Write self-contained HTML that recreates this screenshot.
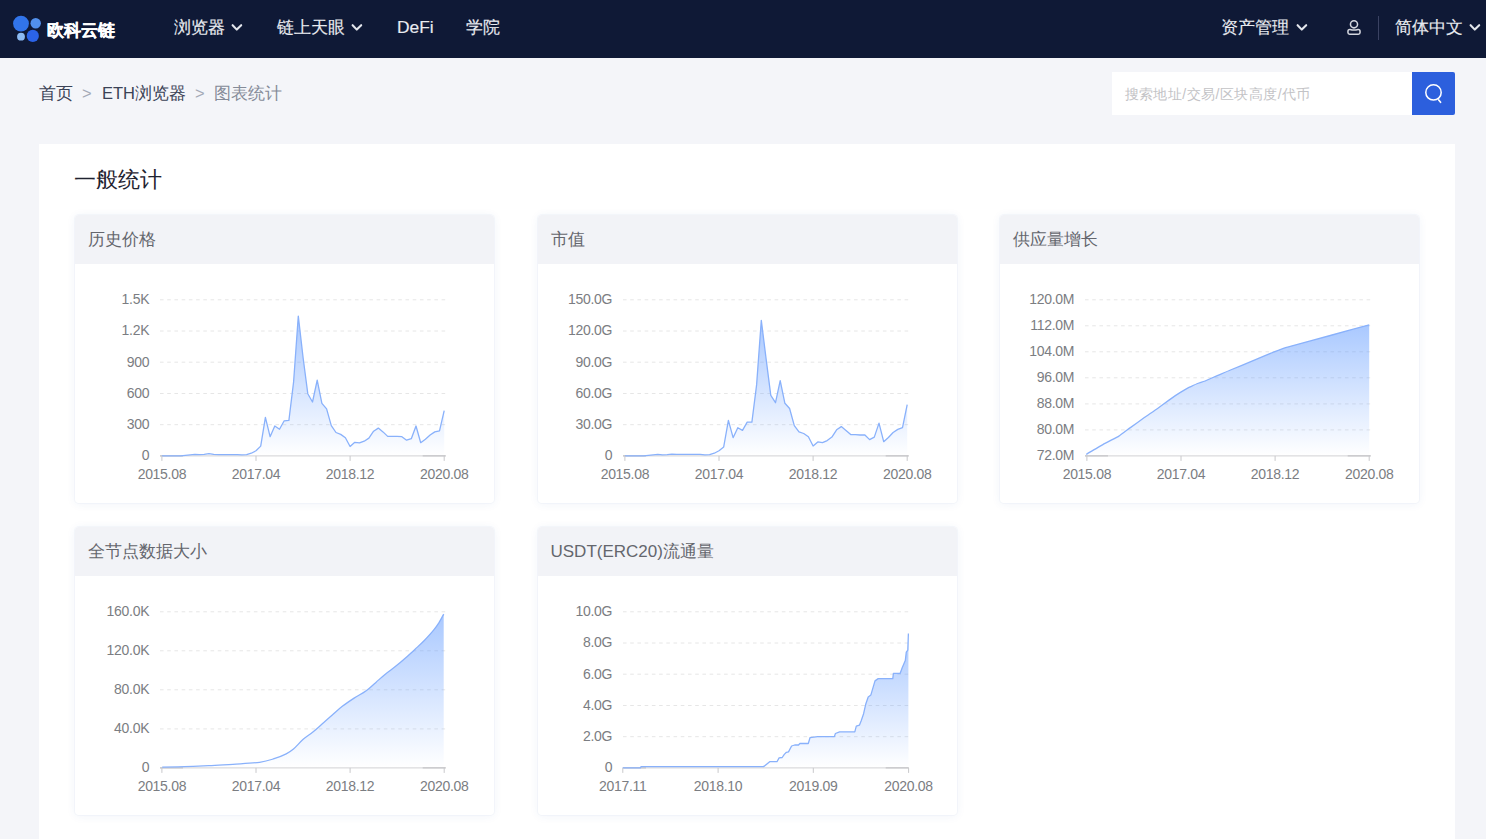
<!DOCTYPE html>
<html><head><meta charset="utf-8"><style>
*{box-sizing:border-box;margin:0;padding:0}
html,body{width:1486px;height:839px;overflow:hidden;background:#f4f5f9;font-family:"Liberation Sans",sans-serif}
.hdr{position:absolute;left:0;top:0;width:1486px;height:57.5px;background:#0f1936}
.abs{position:absolute;white-space:nowrap}
.nav{color:#e9ebf0;font-size:17.4px;line-height:20px;-webkit-text-stroke:0.15px #e9ebf0}
.chev{position:absolute}
.bc{font-size:16.5px;line-height:20px;color:#3b4256}
.main{position:absolute;left:39px;top:144px;width:1416px;height:720px;background:#fff}
.card{position:absolute;width:419px;height:287.5px;background:#fff;border-radius:4px;box-shadow:0 0 0 1px rgba(225,231,245,0.25),0 1px 10px rgba(40,80,170,0.07);overflow:hidden}
.ch{height:49px;background:#f2f3f7;padding-left:13px}
.ch span{display:block;padding-top:15px;font-size:17px;line-height:20px;color:#64666d}
.cs{position:absolute;left:0;top:0}
.yl{font-family:"Liberation Sans",sans-serif;font-size:14px;letter-spacing:-0.3px;fill:#7b7d82;text-anchor:end}
.xl{font-family:"Liberation Sans",sans-serif;font-size:14px;letter-spacing:-0.3px;fill:#7b7d82;text-anchor:middle}
</style></head><body>
<div class="hdr">
  <svg class="abs" style="left:0;top:0" width="130" height="58">
    <circle cx="21" cy="23.6" r="7.9" fill="#3174ea"/>
    <circle cx="35.7" cy="23.2" r="5.2" fill="#5290ec"/>
    <circle cx="21" cy="36.7" r="3.9" fill="#8cbaf2"/>
    <circle cx="32.8" cy="35.9" r="6.1" fill="#2b63e8"/>
  </svg>
  <div class="abs" style="left:46.5px;top:18.2px;font-size:17.2px;line-height:24px;font-weight:bold;color:#fff;-webkit-text-stroke:0.3px #fff">欧科云链</div>
  <div class="abs nav" style="left:174px;top:17px">浏览器</div>
  <svg class="chev" style="left:231px;top:22.9px" width="12" height="10"><path d="M1.6,2.2 L5.8,6.6 L10.2,2.2" fill="none" stroke="#e3e6ec" stroke-width="2.1" stroke-linecap="round" stroke-linejoin="round"/></svg>
  <div class="abs nav" style="left:277px;top:17px">链上天眼</div>
  <svg class="chev" style="left:351px;top:22.9px" width="12" height="10"><path d="M1.6,2.2 L5.8,6.6 L10.2,2.2" fill="none" stroke="#e3e6ec" stroke-width="2.1" stroke-linecap="round" stroke-linejoin="round"/></svg>
  <div class="abs nav" style="left:397px;top:17px">DeFi</div>
  <div class="abs nav" style="left:466px;top:17px">学院</div>
  <div class="abs nav" style="left:1221px;top:17px">资产管理</div>
  <svg class="chev" style="left:1296px;top:22.9px" width="12" height="10"><path d="M1.6,2.2 L5.8,6.6 L10.2,2.2" fill="none" stroke="#e3e6ec" stroke-width="2.1" stroke-linecap="round" stroke-linejoin="round"/></svg>
  <svg class="abs" style="left:1340px;top:15px" width="30" height="27"><circle cx="14" cy="9.3" r="3.55" fill="none" stroke="#d3d6de" stroke-width="1.55"/><path d="M10,14.5 Q14,15.6 18,14.5 L18.3,14.5 Q20.05,14.5 20.05,16.5 L20.05,17.6 Q20.05,19.25 18.3,19.25 L9.7,19.25 Q7.95,19.25 7.95,17.6 L7.95,16.5 Q7.95,14.5 9.7,14.5 Z" fill="none" stroke="#d3d6de" stroke-width="1.55" stroke-linejoin="round"/></svg>
  <div class="abs" style="left:1378px;top:16px;width:1px;height:24px;background:#3a4262"></div>
  <div class="abs nav" style="left:1394.5px;top:17px">简体中文</div>
  <svg class="chev" style="left:1469px;top:22.9px" width="12" height="10"><path d="M1.6,2.2 L5.8,6.6 L10.2,2.2" fill="none" stroke="#e3e6ec" stroke-width="2.1" stroke-linecap="round" stroke-linejoin="round"/></svg>
</div>
<div class="abs bc" style="left:39px;top:83px">首页</div>
<div class="abs bc" style="left:82px;top:83px;color:#a3a9b6">&gt;</div>
<div class="abs bc" style="left:102px;top:83px">ETH浏览器</div>
<div class="abs bc" style="left:195px;top:83px;color:#a3a9b6">&gt;</div>
<div class="abs bc" style="left:214px;top:83px;color:#858b98">图表统计</div>
<div class="abs" style="left:1112px;top:72px;width:300px;height:43px;background:#fff"></div>
<div class="abs" style="left:1124.5px;top:85px;font-size:14px;letter-spacing:0.45px;line-height:18px;color:#c3c3c6">搜索地址/交易/区块高度/代币</div>
<div class="abs" style="left:1412px;top:72px;width:43px;height:43px;background:#2c5fdd;border-radius:0 2px 2px 0"></div>
<svg class="abs" style="left:1412px;top:72px" width="43" height="43"><circle cx="21.5" cy="20.4" r="7.7" fill="none" stroke="#fff" stroke-width="1.5"/><path d="M26.7,27.9 L28.6,30.3" stroke="#fff" stroke-width="1.6" stroke-linecap="round"/></svg>
<div class="main"></div>
<div class="abs" style="left:74px;top:167px;font-size:22px;line-height:26px;color:#1f2330">一般统计</div>
<div class="card" style="left:75.3px;top:215.0px"><div class="ch"><span>历史价格</span></div><svg class="cs" width="420" height="287" viewBox="0 0 420 287"><defs><linearGradient id="g0" x1="0" y1="0" x2="0" y2="1"><stop offset="0" stop-color="#5a96ff" stop-opacity="0.52"/><stop offset="1" stop-color="#5a96ff" stop-opacity="0"/></linearGradient></defs><line x1="85.0" y1="84.8" x2="370.7" y2="84.8" stroke="#e6e6e6" stroke-width="1" stroke-dasharray="3.6,3.62"/><line x1="85.0" y1="116.0" x2="370.7" y2="116.0" stroke="#e6e6e6" stroke-width="1" stroke-dasharray="3.6,3.62"/><line x1="85.0" y1="147.2" x2="370.7" y2="147.2" stroke="#e6e6e6" stroke-width="1" stroke-dasharray="3.6,3.62"/><line x1="85.0" y1="178.5" x2="370.7" y2="178.5" stroke="#e6e6e6" stroke-width="1" stroke-dasharray="3.6,3.62"/><line x1="85.0" y1="209.7" x2="370.7" y2="209.7" stroke="#e6e6e6" stroke-width="1" stroke-dasharray="3.6,3.62"/><text x="74.2" y="89.1" class="yl">1.5K</text><text x="74.2" y="120.3" class="yl">1.2K</text><text x="74.2" y="151.5" class="yl">900</text><text x="74.2" y="182.8" class="yl">600</text><text x="74.2" y="214.0" class="yl">300</text><text x="74.2" y="245.2" class="yl">0</text><path d="M86.9,240.9 L91.6,240.9 L96.3,240.9 L101.0,240.9 L105.7,240.9 L110.4,240.4 L115.1,239.8 L119.8,239.4 L124.5,239.6 L129.2,239.4 L133.9,238.6 L138.7,239.4 L143.4,239.6 L148.1,239.6 L152.8,239.6 L157.5,239.6 L162.2,239.6 L166.9,239.8 L171.6,239.6 L176.3,238.2 L181.0,235.7 L185.7,231.1 L190.4,202.3 L195.1,221.7 L199.8,211.0 L204.5,214.2 L209.2,205.8 L213.9,205.4 L218.6,166.8 L223.3,101.1 L228.1,142.8 L232.8,178.7 L237.5,187.0 L242.2,165.1 L246.9,188.3 L251.6,193.9 L256.3,210.6 L261.0,217.5 L265.7,219.4 L270.4,222.7 L275.1,231.5 L279.8,227.3 L284.5,227.9 L289.2,226.2 L293.9,223.1 L298.6,216.2 L303.3,213.1 L308.0,216.9 L312.7,221.4 L317.4,221.4 L322.1,221.4 L326.9,221.7 L331.6,225.2 L336.3,223.7 L341.0,211.0 L345.7,227.7 L350.4,224.2 L355.1,220.0 L359.8,216.9 L364.5,215.8 L369.2,195.6 L369.2,240.9 L86.9,240.9 Z" fill="url(#g0)"/><line x1="85.0" y1="240.9" x2="370.7" y2="240.9" stroke="#d2d2d4" stroke-width="1"/><line x1="347.7" y1="240.9" x2="370.7" y2="240.9" stroke="#bdbdc0" stroke-width="1"/><line x1="85.0" y1="240.9" x2="108.0" y2="240.9" stroke="#bdbdc0" stroke-width="1"/><path d="M86.9,240.9 L91.6,240.9 L96.3,240.9 L101.0,240.9 L105.7,240.9 L110.4,240.4 L115.1,239.8 L119.8,239.4 L124.5,239.6 L129.2,239.4 L133.9,238.6 L138.7,239.4 L143.4,239.6 L148.1,239.6 L152.8,239.6 L157.5,239.6 L162.2,239.6 L166.9,239.8 L171.6,239.6 L176.3,238.2 L181.0,235.7 L185.7,231.1 L190.4,202.3 L195.1,221.7 L199.8,211.0 L204.5,214.2 L209.2,205.8 L213.9,205.4 L218.6,166.8 L223.3,101.1 L228.1,142.8 L232.8,178.7 L237.5,187.0 L242.2,165.1 L246.9,188.3 L251.6,193.9 L256.3,210.6 L261.0,217.5 L265.7,219.4 L270.4,222.7 L275.1,231.5 L279.8,227.3 L284.5,227.9 L289.2,226.2 L293.9,223.1 L298.6,216.2 L303.3,213.1 L308.0,216.9 L312.7,221.4 L317.4,221.4 L322.1,221.4 L326.9,221.7 L331.6,225.2 L336.3,223.7 L341.0,211.0 L345.7,227.7 L350.4,224.2 L355.1,220.0 L359.8,216.9 L364.5,215.8 L369.2,195.6" fill="none" stroke="#89b1fb" stroke-width="1.3" stroke-linejoin="round"/><line x1="86.9" y1="240.9" x2="86.9" y2="245.9" stroke="#c8c8cb" stroke-width="1"/><text x="86.9" y="263.9" class="xl">2015.08</text><line x1="181.0" y1="240.9" x2="181.0" y2="245.9" stroke="#c8c8cb" stroke-width="1"/><text x="181.0" y="263.9" class="xl">2017.04</text><line x1="275.1" y1="240.9" x2="275.1" y2="245.9" stroke="#c8c8cb" stroke-width="1"/><text x="275.1" y="263.9" class="xl">2018.12</text><line x1="369.2" y1="240.9" x2="369.2" y2="245.9" stroke="#c8c8cb" stroke-width="1"/><text x="369.2" y="263.9" class="xl">2020.08</text></svg></div>
<div class="card" style="left:537.5px;top:215.0px"><div class="ch"><span>市值</span></div><svg class="cs" width="420" height="287" viewBox="0 0 420 287"><defs><linearGradient id="g1" x1="0" y1="0" x2="0" y2="1"><stop offset="0" stop-color="#5a96ff" stop-opacity="0.52"/><stop offset="1" stop-color="#5a96ff" stop-opacity="0"/></linearGradient></defs><line x1="85.0" y1="84.8" x2="370.7" y2="84.8" stroke="#e6e6e6" stroke-width="1" stroke-dasharray="3.6,3.62"/><line x1="85.0" y1="116.0" x2="370.7" y2="116.0" stroke="#e6e6e6" stroke-width="1" stroke-dasharray="3.6,3.62"/><line x1="85.0" y1="147.2" x2="370.7" y2="147.2" stroke="#e6e6e6" stroke-width="1" stroke-dasharray="3.6,3.62"/><line x1="85.0" y1="178.5" x2="370.7" y2="178.5" stroke="#e6e6e6" stroke-width="1" stroke-dasharray="3.6,3.62"/><line x1="85.0" y1="209.7" x2="370.7" y2="209.7" stroke="#e6e6e6" stroke-width="1" stroke-dasharray="3.6,3.62"/><text x="74.2" y="89.1" class="yl">150.0G</text><text x="74.2" y="120.3" class="yl">120.0G</text><text x="74.2" y="151.5" class="yl">90.0G</text><text x="74.2" y="182.8" class="yl">60.0G</text><text x="74.2" y="214.0" class="yl">30.0G</text><text x="74.2" y="245.2" class="yl">0</text><path d="M86.9,240.9 L91.6,240.9 L96.3,240.9 L101.0,240.9 L105.7,240.9 L110.4,240.4 L115.1,239.8 L119.8,239.4 L124.5,239.8 L129.2,239.6 L133.9,239.2 L138.7,239.4 L143.4,239.4 L148.1,239.4 L152.8,239.4 L157.5,239.4 L162.2,239.4 L166.9,239.8 L171.6,239.6 L176.3,238.2 L181.0,235.7 L185.7,231.9 L190.4,205.4 L195.1,222.7 L199.8,212.7 L204.5,215.4 L209.2,207.1 L213.9,207.1 L218.6,169.9 L223.3,105.3 L228.1,143.8 L232.8,180.4 L237.5,187.7 L242.2,165.7 L246.9,188.3 L251.6,193.5 L256.3,210.6 L261.0,216.9 L265.7,218.5 L270.4,221.7 L275.1,231.0 L279.8,226.9 L284.5,227.7 L289.2,225.6 L293.9,222.1 L298.6,214.8 L303.3,211.6 L308.0,215.4 L312.7,219.6 L317.4,219.6 L322.1,220.0 L326.9,220.0 L331.6,224.6 L336.3,222.1 L341.0,208.1 L345.7,226.7 L350.4,222.5 L355.1,217.5 L359.8,214.4 L364.5,212.7 L369.2,189.7 L369.2,240.9 L86.9,240.9 Z" fill="url(#g1)"/><line x1="85.0" y1="240.9" x2="370.7" y2="240.9" stroke="#d2d2d4" stroke-width="1"/><line x1="347.7" y1="240.9" x2="370.7" y2="240.9" stroke="#bdbdc0" stroke-width="1"/><line x1="85.0" y1="240.9" x2="108.0" y2="240.9" stroke="#bdbdc0" stroke-width="1"/><path d="M86.9,240.9 L91.6,240.9 L96.3,240.9 L101.0,240.9 L105.7,240.9 L110.4,240.4 L115.1,239.8 L119.8,239.4 L124.5,239.8 L129.2,239.6 L133.9,239.2 L138.7,239.4 L143.4,239.4 L148.1,239.4 L152.8,239.4 L157.5,239.4 L162.2,239.4 L166.9,239.8 L171.6,239.6 L176.3,238.2 L181.0,235.7 L185.7,231.9 L190.4,205.4 L195.1,222.7 L199.8,212.7 L204.5,215.4 L209.2,207.1 L213.9,207.1 L218.6,169.9 L223.3,105.3 L228.1,143.8 L232.8,180.4 L237.5,187.7 L242.2,165.7 L246.9,188.3 L251.6,193.5 L256.3,210.6 L261.0,216.9 L265.7,218.5 L270.4,221.7 L275.1,231.0 L279.8,226.9 L284.5,227.7 L289.2,225.6 L293.9,222.1 L298.6,214.8 L303.3,211.6 L308.0,215.4 L312.7,219.6 L317.4,219.6 L322.1,220.0 L326.9,220.0 L331.6,224.6 L336.3,222.1 L341.0,208.1 L345.7,226.7 L350.4,222.5 L355.1,217.5 L359.8,214.4 L364.5,212.7 L369.2,189.7" fill="none" stroke="#89b1fb" stroke-width="1.3" stroke-linejoin="round"/><line x1="86.9" y1="240.9" x2="86.9" y2="245.9" stroke="#c8c8cb" stroke-width="1"/><text x="86.9" y="263.9" class="xl">2015.08</text><line x1="181.0" y1="240.9" x2="181.0" y2="245.9" stroke="#c8c8cb" stroke-width="1"/><text x="181.0" y="263.9" class="xl">2017.04</text><line x1="275.1" y1="240.9" x2="275.1" y2="245.9" stroke="#c8c8cb" stroke-width="1"/><text x="275.1" y="263.9" class="xl">2018.12</text><line x1="369.2" y1="240.9" x2="369.2" y2="245.9" stroke="#c8c8cb" stroke-width="1"/><text x="369.2" y="263.9" class="xl">2020.08</text></svg></div>
<div class="card" style="left:999.7px;top:215.0px"><div class="ch"><span>供应量增长</span></div><svg class="cs" width="420" height="287" viewBox="0 0 420 287"><defs><linearGradient id="g2" x1="0" y1="0" x2="0" y2="1"><stop offset="0" stop-color="#5a96ff" stop-opacity="0.52"/><stop offset="1" stop-color="#5a96ff" stop-opacity="0"/></linearGradient></defs><line x1="85.0" y1="84.8" x2="370.7" y2="84.8" stroke="#e6e6e6" stroke-width="1" stroke-dasharray="3.6,3.62"/><line x1="85.0" y1="110.8" x2="370.7" y2="110.8" stroke="#e6e6e6" stroke-width="1" stroke-dasharray="3.6,3.62"/><line x1="85.0" y1="136.8" x2="370.7" y2="136.8" stroke="#e6e6e6" stroke-width="1" stroke-dasharray="3.6,3.62"/><line x1="85.0" y1="162.8" x2="370.7" y2="162.8" stroke="#e6e6e6" stroke-width="1" stroke-dasharray="3.6,3.62"/><line x1="85.0" y1="188.9" x2="370.7" y2="188.9" stroke="#e6e6e6" stroke-width="1" stroke-dasharray="3.6,3.62"/><line x1="85.0" y1="214.9" x2="370.7" y2="214.9" stroke="#e6e6e6" stroke-width="1" stroke-dasharray="3.6,3.62"/><text x="74.2" y="89.1" class="yl">120.0M</text><text x="74.2" y="115.1" class="yl">112.0M</text><text x="74.2" y="141.1" class="yl">104.0M</text><text x="74.2" y="167.2" class="yl">96.0M</text><text x="74.2" y="193.2" class="yl">88.0M</text><text x="74.2" y="219.2" class="yl">80.0M</text><text x="74.2" y="245.2" class="yl">72.0M</text><path d="M86.3,239.4 C86.7,239.1 93.8,234.9 94.6,234.4 C95.4,233.9 102.0,230.1 103.2,229.4 C104.4,228.7 117.5,221.9 118.9,221.1 C120.3,220.3 129.1,213.5 130.4,212.6 C131.7,211.7 143.3,203.3 144.7,202.3 C146.1,201.3 156.4,194.3 157.6,193.4 C158.8,192.5 167.9,185.9 169.0,185.1 C170.1,184.3 179.4,178.0 180.4,177.4 C181.4,176.8 188.1,172.8 189.0,172.4 C189.9,172.0 196.7,168.8 197.6,168.5 C198.5,168.2 205.3,165.9 206.2,165.5 C207.1,165.1 215.0,161.6 216.2,161.1 C217.4,160.6 228.7,155.7 230.5,155.0 C232.3,154.3 249.9,147.1 252.0,146.2 C254.1,145.3 271.8,137.8 273.4,137.2 C275.0,136.6 282.6,133.6 283.4,133.3 C284.2,133.0 288.0,132.0 290.3,131.4 C292.6,130.8 326.4,121.6 330.3,120.5 C334.2,119.4 367.3,110.3 369.2,109.8 L369.2,240.9 L86.3,240.9 Z" fill="url(#g2)"/><line x1="85.0" y1="240.9" x2="370.7" y2="240.9" stroke="#d2d2d4" stroke-width="1"/><line x1="347.7" y1="240.9" x2="370.7" y2="240.9" stroke="#bdbdc0" stroke-width="1"/><line x1="85.0" y1="240.9" x2="108.0" y2="240.9" stroke="#bdbdc0" stroke-width="1"/><path d="M86.3,239.4 C86.7,239.1 93.8,234.9 94.6,234.4 C95.4,233.9 102.0,230.1 103.2,229.4 C104.4,228.7 117.5,221.9 118.9,221.1 C120.3,220.3 129.1,213.5 130.4,212.6 C131.7,211.7 143.3,203.3 144.7,202.3 C146.1,201.3 156.4,194.3 157.6,193.4 C158.8,192.5 167.9,185.9 169.0,185.1 C170.1,184.3 179.4,178.0 180.4,177.4 C181.4,176.8 188.1,172.8 189.0,172.4 C189.9,172.0 196.7,168.8 197.6,168.5 C198.5,168.2 205.3,165.9 206.2,165.5 C207.1,165.1 215.0,161.6 216.2,161.1 C217.4,160.6 228.7,155.7 230.5,155.0 C232.3,154.3 249.9,147.1 252.0,146.2 C254.1,145.3 271.8,137.8 273.4,137.2 C275.0,136.6 282.6,133.6 283.4,133.3 C284.2,133.0 288.0,132.0 290.3,131.4 C292.6,130.8 326.4,121.6 330.3,120.5 C334.2,119.4 367.3,110.3 369.2,109.8" fill="none" stroke="#89b1fb" stroke-width="1.3" stroke-linejoin="round"/><line x1="86.9" y1="240.9" x2="86.9" y2="245.9" stroke="#c8c8cb" stroke-width="1"/><text x="86.9" y="263.9" class="xl">2015.08</text><line x1="181.0" y1="240.9" x2="181.0" y2="245.9" stroke="#c8c8cb" stroke-width="1"/><text x="181.0" y="263.9" class="xl">2017.04</text><line x1="275.1" y1="240.9" x2="275.1" y2="245.9" stroke="#c8c8cb" stroke-width="1"/><text x="275.1" y="263.9" class="xl">2018.12</text><line x1="369.2" y1="240.9" x2="369.2" y2="245.9" stroke="#c8c8cb" stroke-width="1"/><text x="369.2" y="263.9" class="xl">2020.08</text></svg></div>
<div class="card" style="left:75.3px;top:527.3px"><div class="ch"><span>全节点数据大小</span></div><svg class="cs" width="420" height="287" viewBox="0 0 420 287"><defs><linearGradient id="g3" x1="0" y1="0" x2="0" y2="1"><stop offset="0" stop-color="#5a96ff" stop-opacity="0.52"/><stop offset="1" stop-color="#5a96ff" stop-opacity="0"/></linearGradient></defs><line x1="85.0" y1="84.8" x2="370.7" y2="84.8" stroke="#e6e6e6" stroke-width="1" stroke-dasharray="3.6,3.62"/><line x1="85.0" y1="123.8" x2="370.7" y2="123.8" stroke="#e6e6e6" stroke-width="1" stroke-dasharray="3.6,3.62"/><line x1="85.0" y1="162.8" x2="370.7" y2="162.8" stroke="#e6e6e6" stroke-width="1" stroke-dasharray="3.6,3.62"/><line x1="85.0" y1="201.9" x2="370.7" y2="201.9" stroke="#e6e6e6" stroke-width="1" stroke-dasharray="3.6,3.62"/><text x="74.2" y="89.1" class="yl">160.0K</text><text x="74.2" y="128.1" class="yl">120.0K</text><text x="74.2" y="167.2" class="yl">80.0K</text><text x="74.2" y="206.2" class="yl">40.0K</text><text x="74.2" y="245.2" class="yl">0</text><path d="M87.2,240.2 C91.1,240.1 101.4,239.9 109.5,239.7 C117.6,239.4 125.2,239.1 133.7,238.7 C142.2,238.3 149.0,237.8 157.9,237.3 C166.8,236.7 177.4,236.3 184.6,235.3 C191.8,234.3 194.5,233.2 199.1,231.7 C203.8,230.2 207.8,228.5 211.2,226.8 C214.6,225.1 215.5,224.5 218.5,222.0 C221.5,219.4 224.8,215.3 228.2,212.3 C231.6,209.3 234.5,207.8 237.9,205.0 C241.3,202.3 244.2,199.5 247.6,196.6 C251.0,193.6 253.9,191.0 257.3,188.1 C260.7,185.1 263.1,182.6 267.0,179.6 C270.8,176.6 274.8,173.9 279.1,171.1 C283.3,168.4 287.4,166.6 291.2,163.8 C295.0,161.1 297.5,158.3 300.9,155.4 C304.3,152.4 307.2,149.6 310.6,146.9 C314.0,144.1 316.9,142.3 320.3,139.6 C323.6,137.0 326.6,134.6 329.9,131.6 C333.3,128.7 336.2,125.8 339.6,122.7 C343.0,119.5 345.9,117.0 349.3,113.5 C352.7,109.9 356.5,105.7 359.0,102.6 C361.6,99.5 362.2,98.5 363.9,95.8 C365.6,93.1 367.9,88.6 368.7,87.1 L368.7,240.9 L87.2,240.9 Z" fill="url(#g3)"/><line x1="85.0" y1="240.9" x2="370.7" y2="240.9" stroke="#d2d2d4" stroke-width="1"/><line x1="347.7" y1="240.9" x2="370.7" y2="240.9" stroke="#bdbdc0" stroke-width="1"/><line x1="85.0" y1="240.9" x2="108.0" y2="240.9" stroke="#bdbdc0" stroke-width="1"/><path d="M87.2,240.2 C91.1,240.1 101.4,239.9 109.5,239.7 C117.6,239.4 125.2,239.1 133.7,238.7 C142.2,238.3 149.0,237.8 157.9,237.3 C166.8,236.7 177.4,236.3 184.6,235.3 C191.8,234.3 194.5,233.2 199.1,231.7 C203.8,230.2 207.8,228.5 211.2,226.8 C214.6,225.1 215.5,224.5 218.5,222.0 C221.5,219.4 224.8,215.3 228.2,212.3 C231.6,209.3 234.5,207.8 237.9,205.0 C241.3,202.3 244.2,199.5 247.6,196.6 C251.0,193.6 253.9,191.0 257.3,188.1 C260.7,185.1 263.1,182.6 267.0,179.6 C270.8,176.6 274.8,173.9 279.1,171.1 C283.3,168.4 287.4,166.6 291.2,163.8 C295.0,161.1 297.5,158.3 300.9,155.4 C304.3,152.4 307.2,149.6 310.6,146.9 C314.0,144.1 316.9,142.3 320.3,139.6 C323.6,137.0 326.6,134.6 329.9,131.6 C333.3,128.7 336.2,125.8 339.6,122.7 C343.0,119.5 345.9,117.0 349.3,113.5 C352.7,109.9 356.5,105.7 359.0,102.6 C361.6,99.5 362.2,98.5 363.9,95.8 C365.6,93.1 367.9,88.6 368.7,87.1" fill="none" stroke="#89b1fb" stroke-width="1.3" stroke-linejoin="round"/><line x1="86.9" y1="240.9" x2="86.9" y2="245.9" stroke="#c8c8cb" stroke-width="1"/><text x="86.9" y="263.9" class="xl">2015.08</text><line x1="181.0" y1="240.9" x2="181.0" y2="245.9" stroke="#c8c8cb" stroke-width="1"/><text x="181.0" y="263.9" class="xl">2017.04</text><line x1="275.1" y1="240.9" x2="275.1" y2="245.9" stroke="#c8c8cb" stroke-width="1"/><text x="275.1" y="263.9" class="xl">2018.12</text><line x1="369.2" y1="240.9" x2="369.2" y2="245.9" stroke="#c8c8cb" stroke-width="1"/><text x="369.2" y="263.9" class="xl">2020.08</text></svg></div>
<div class="card" style="left:537.5px;top:527.3px"><div class="ch"><span>USDT(ERC20)流通量</span></div><svg class="cs" width="420" height="287" viewBox="0 0 420 287"><defs><linearGradient id="g4" x1="0" y1="0" x2="0" y2="1"><stop offset="0" stop-color="#5a96ff" stop-opacity="0.52"/><stop offset="1" stop-color="#5a96ff" stop-opacity="0"/></linearGradient></defs><line x1="85.0" y1="84.8" x2="370.7" y2="84.8" stroke="#e6e6e6" stroke-width="1" stroke-dasharray="3.6,3.62"/><line x1="85.0" y1="116.0" x2="370.7" y2="116.0" stroke="#e6e6e6" stroke-width="1" stroke-dasharray="3.6,3.62"/><line x1="85.0" y1="147.2" x2="370.7" y2="147.2" stroke="#e6e6e6" stroke-width="1" stroke-dasharray="3.6,3.62"/><line x1="85.0" y1="178.5" x2="370.7" y2="178.5" stroke="#e6e6e6" stroke-width="1" stroke-dasharray="3.6,3.62"/><line x1="85.0" y1="209.7" x2="370.7" y2="209.7" stroke="#e6e6e6" stroke-width="1" stroke-dasharray="3.6,3.62"/><text x="74.2" y="89.1" class="yl">10.0G</text><text x="74.2" y="120.3" class="yl">8.0G</text><text x="74.2" y="151.5" class="yl">6.0G</text><text x="74.2" y="182.8" class="yl">4.0G</text><text x="74.2" y="214.0" class="yl">2.0G</text><text x="74.2" y="245.2" class="yl">0</text><path d="M84.6,240.9 L102.3,240.9 L103.1,239.6 L225.9,239.5 L231.7,234.7 L239.0,234.7 L241.1,230.9 L244.2,230.5 L246.3,227.4 L248.4,225.3 L250.5,224.9 L253.6,219.0 L256.7,218.0 L260.5,218.0 L261.9,216.5 L270.3,216.5 L272.0,210.7 L279.7,209.6 L296.4,209.6 L297.4,206.5 L301.6,204.8 L316.8,204.8 L318.3,199.2 L321.4,198.2 L323.1,194.0 L325.6,186.7 L327.7,177.3 L330.2,170.0 L332.9,167.9 L337.0,153.9 L340.2,151.6 L354.8,151.6 L355.4,146.4 L362.1,146.4 L364.2,140.8 L367.3,133.5 L368.3,125.1 L369.8,123.1 L370.4,106.4 L370.4,240.9 L84.6,240.9 Z" fill="url(#g4)"/><line x1="85.0" y1="240.9" x2="370.7" y2="240.9" stroke="#d2d2d4" stroke-width="1"/><line x1="347.7" y1="240.9" x2="370.7" y2="240.9" stroke="#bdbdc0" stroke-width="1"/><line x1="85.0" y1="240.9" x2="108.0" y2="240.9" stroke="#bdbdc0" stroke-width="1"/><path d="M84.6,240.9 L102.3,240.9 L103.1,239.6 L225.9,239.5 L231.7,234.7 L239.0,234.7 L241.1,230.9 L244.2,230.5 L246.3,227.4 L248.4,225.3 L250.5,224.9 L253.6,219.0 L256.7,218.0 L260.5,218.0 L261.9,216.5 L270.3,216.5 L272.0,210.7 L279.7,209.6 L296.4,209.6 L297.4,206.5 L301.6,204.8 L316.8,204.8 L318.3,199.2 L321.4,198.2 L323.1,194.0 L325.6,186.7 L327.7,177.3 L330.2,170.0 L332.9,167.9 L337.0,153.9 L340.2,151.6 L354.8,151.6 L355.4,146.4 L362.1,146.4 L364.2,140.8 L367.3,133.5 L368.3,125.1 L369.8,123.1 L370.4,106.4" fill="none" stroke="#89b1fb" stroke-width="1.3" stroke-linejoin="round"/><line x1="84.8" y1="240.9" x2="84.8" y2="245.9" stroke="#c8c8cb" stroke-width="1"/><text x="84.8" y="263.9" class="xl">2017.11</text><line x1="180.1" y1="240.9" x2="180.1" y2="245.9" stroke="#c8c8cb" stroke-width="1"/><text x="180.1" y="263.9" class="xl">2018.10</text><line x1="275.3" y1="240.9" x2="275.3" y2="245.9" stroke="#c8c8cb" stroke-width="1"/><text x="275.3" y="263.9" class="xl">2019.09</text><line x1="370.6" y1="240.9" x2="370.6" y2="245.9" stroke="#c8c8cb" stroke-width="1"/><text x="370.6" y="263.9" class="xl">2020.08</text></svg></div>
</body></html>
